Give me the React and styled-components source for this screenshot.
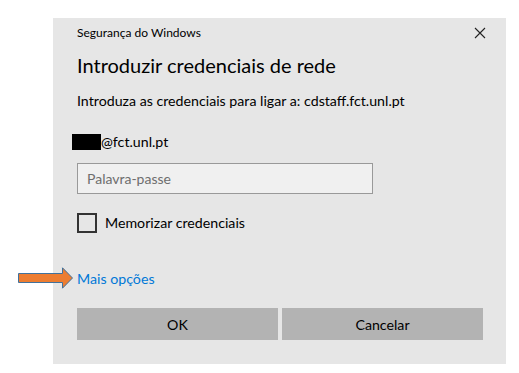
import React from 'react'
import styled, { createGlobalStyle } from 'styled-components'

const GlobalStyle = createGlobalStyle`
  html, body {
    margin: 0;
    padding: 0;
    background: #fff;
  }
  body {
    font-family: Lato, 'Noto Sans', sans-serif;
    color: #000;
  }
`

const Page = styled.div`
  width: 519px;
  height: 373px;
  padding: 18px 0 0 53px;
  box-sizing: border-box;
`

const Dialog = styled.div`
  width: 453px;
  height: 346px;
  box-sizing: border-box;
  background: #e6e6e6;
  padding: 5px 16px 24px 24px;
  display: flex;
  flex-direction: column;
`

const TitleBar = styled.div`
  display: flex;
  justify-content: space-between;
  align-items: center;
  height: 20px;
`

const Caption = styled.span`
  font-size: 12px;
  line-height: 20px;
`

const Close = styled.button`
  border: none;
  background: none;
  padding: 0;
  width: 20px;
  height: 20px;
  display: flex;
  align-items: center;
  justify-content: center;
  cursor: pointer;
`

const Heading = styled.h1`
  margin: 8px 0 0;
  font-size: 20px;
  font-weight: 400;
  line-height: 28px;
`

const Text = styled.p`
  margin: ${(p) => p.$top}px 0 0;
  font-size: 14.2px;
  line-height: 20px;
  display: flex;
  align-items: center;
`

const Redacted = styled.span`
  display: inline-block;
  width: 29px;
  height: 16px;
  background: #000;
  margin-left: -5px;
`

const Input = styled.input`
  margin-top: 11px;
  width: 296px;
  height: 31px;
  box-sizing: border-box;
  border: 1px solid #999;
  background: #f0f0f0;
  padding: 0 9px;
  font-family: inherit;
  font-size: 14px;
  outline: none;

  &::placeholder {
    color: #6e6e6e;
  }
`

const CheckRow = styled.label`
  margin-top: 19px;
  display: flex;
  align-items: center;
  gap: 8px;
  font-size: 14.2px;
  line-height: 20px;
  cursor: pointer;
`

const Box = styled.span`
  width: 20px;
  height: 20px;
  box-sizing: border-box;
  border: 2px solid #333;
`

const LinkRow = styled.div`
  position: relative;
  margin-top: 35px;
  height: 20px;
  margin-bottom: 2px;
`

const Link = styled.a`
  font-size: 14.2px;
  line-height: 20px;
  color: #0078d7;
  text-decoration: none;
  cursor: pointer;
`

const Arrow = styled.svg`
  position: absolute;
  left: -59px;
  top: -1px;
`

const Buttons = styled.div`
  margin-top: 18px;
  display: grid;
  grid-template-columns: 201px 201px;
  gap: 4px;
`

const Button = styled.button`
  height: 32px;
  border: none;
  background: #b3b3b3;
  font-family: inherit;
  font-size: 14.2px;
  color: #000;
  cursor: pointer;
`

export default function App() {
  return (
    <>
      <GlobalStyle />
      <Page>
        <Dialog>
          <TitleBar>
            <Caption>Segurança do Windows</Caption>
            <Close aria-label='Fechar'>
              <svg width='12' height='12' viewBox='0 0 12 12'>
                <path d='M1 1L11 11M11 1L1 11' stroke='#222' strokeWidth='1.1' />
              </svg>
            </Close>
          </TitleBar>
          <Heading>Introduzir credenciais de rede</Heading>
          <Text $top={12}>Introduza as credenciais para ligar a: cdstaff.fct.unl.pt</Text>
          <Text $top={21}>
            <Redacted />
            @fct.unl.pt
          </Text>
          <Input type='password' placeholder='Palavra-passe' />
          <CheckRow>
            <Box />
            Memorizar credenciais
          </CheckRow>
          <LinkRow>
            <Arrow width='56' height='22' viewBox='0 0 56 22'>
              <path
                d='M0.5 6.5H44.5V0.8L54.5 11L44.5 21.2V15.5H0.5Z'
                fill='#ed7d31'
                stroke='#41719c'
                strokeWidth='1'
              />
            </Arrow>
            <Link>Mais opções</Link>
          </LinkRow>
          <Buttons>
            <Button>OK</Button>
            <Button>Cancelar</Button>
          </Buttons>
        </Dialog>
      </Page>
    </>
  )
}
